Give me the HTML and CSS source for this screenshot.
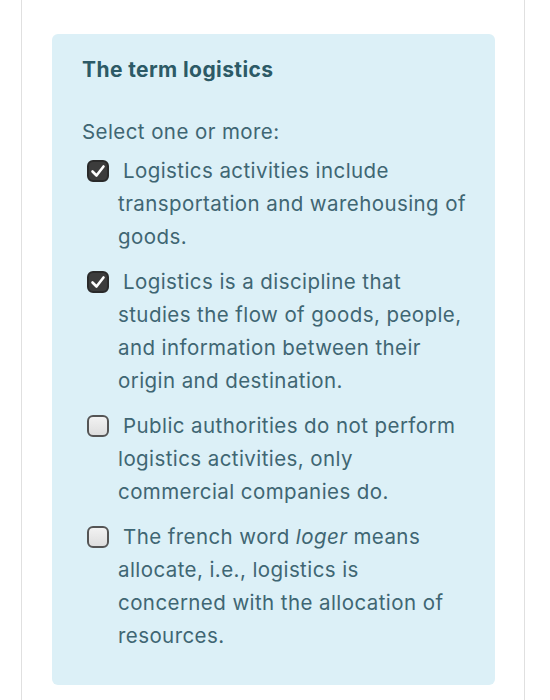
FILE: index.html
```html
<!DOCTYPE html>
<html>
<head>
<meta charset="utf-8">
<link rel="stylesheet" href="styles.css">
</head>
<body>
<div class="page">
  <div class="card">
    <h2 class="title">The term logistics</h2>
    <div class="prompt">Select one or more:</div>
    <div class="option"><span class="box checked"><svg viewBox="0 0 22 22" width="22" height="22"><path d="M5.5 11.5 L9.5 15.5 L16.5 6.5" fill="none" stroke="#fff" stroke-width="2.6" stroke-linecap="round" stroke-linejoin="round"/></svg></span>Logistics activities include<br>transportation and warehousing of<br>goods.</div>
    <div class="option"><span class="box checked"><svg viewBox="0 0 22 22" width="22" height="22"><path d="M5.5 11.5 L9.5 15.5 L16.5 6.5" fill="none" stroke="#fff" stroke-width="2.6" stroke-linecap="round" stroke-linejoin="round"/></svg></span>Logistics is a discipline that<br>studies the flow of goods, people,<br>and information between their<br>origin and destination.</div>
    <div class="option"><span class="box"></span>Public authorities do not perform<br>logistics activities, only<br>commercial companies do.</div>
    <div class="option"><span class="box"></span>The french word <em>loger</em> means<br>allocate, i.e., logistics is<br>concerned with the allocation of<br>resources.</div>
  </div>
</div>
</body>
</html>
```

FILE: styles.css
```css
html, body {
  margin: 0;
  padding: 0;
  background: #fff;
}
body {
  font-family: Inter, "Liberation Sans", Arial, sans-serif;
  width: 550px;
  height: 700px;
  overflow: hidden;
}
.page {
  margin-left: 21px;
  width: 472px;
  height: 700px;
  border-left: 1px solid #e0e0e0;
  border-right: 1px solid #e0e0e0;
  padding: 34px 0 0 30px;
  box-sizing: content-box;
}
.card {
  width: 443px;
  box-sizing: border-box;
  background: #dcf0f7;
  border-radius: 6px;
  padding: 22px 0 33px 30px;
  color: #3f6673;
  white-space: nowrap;
}
.title {
  margin: 0 0 31px 0;
  font-size: 21px;
  line-height: 28px;
  font-weight: 700;
  letter-spacing: 0.4px;
  color: #2c5a66;
}
.prompt {
  font-size: 20.5px;
  line-height: 33px;
  letter-spacing: 0.42px;
  margin-bottom: 6px;
}
.option {
  font-size: 20.5px;
  line-height: 33px;
  letter-spacing: 0.42px;
  padding-left: 36px;
  text-indent: -36px;
  margin-bottom: 12px;
}
.option:last-child {
  margin-bottom: 0;
}
.box {
  display: inline-block;
  box-sizing: border-box;
  width: 22px;
  height: 22px;
  margin: 0 14px 0 5px;
  vertical-align: -4px;
  border-radius: 6px;
  border: 2px solid #555;
  background: linear-gradient(#f2f2f2, #dedede);
  text-indent: 0;
  position: relative;
}
.box.checked {
  background: #3c3c3c;
  border-color: #2a2a2a;
}
.box svg {
  position: absolute;
  left: -2px;
  top: -2px;
}
```
